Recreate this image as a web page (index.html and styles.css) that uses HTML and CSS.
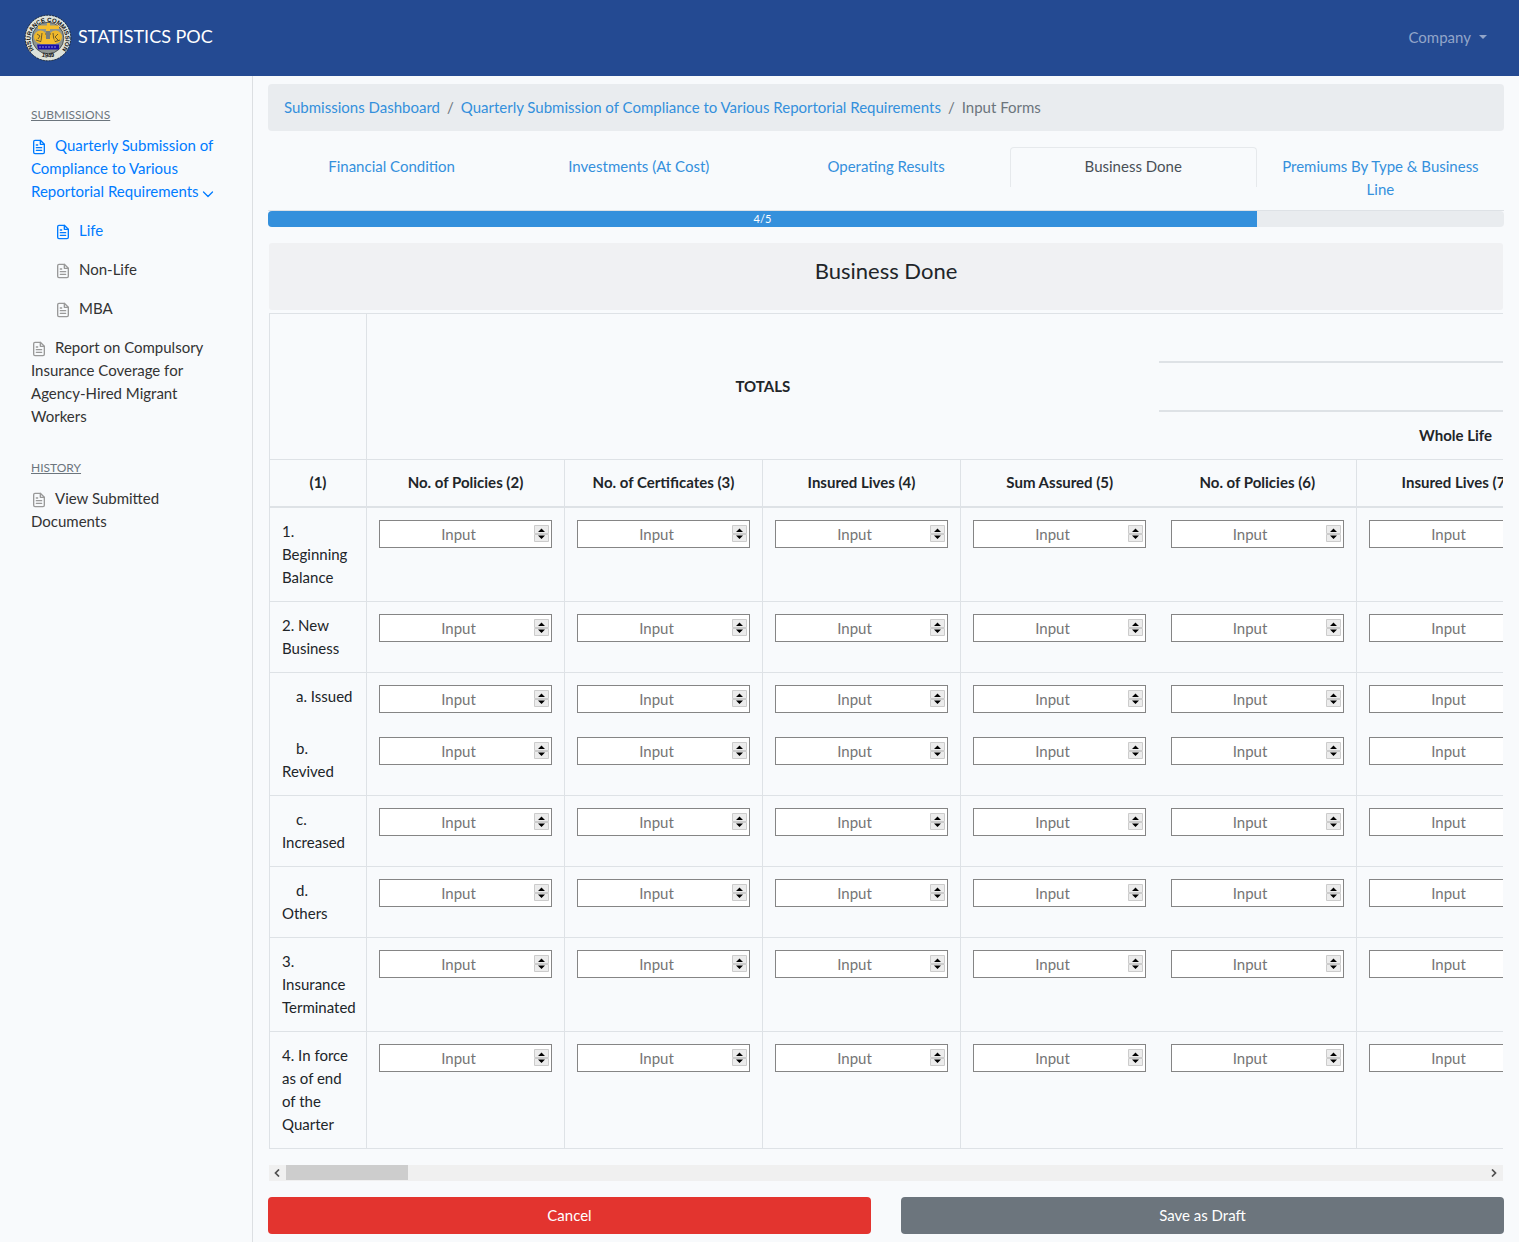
FILE: index.html
```html
<!DOCTYPE html>
<html lang="en">
<head>
<meta charset="utf-8">
<title>Statistics POC</title>
<meta name="viewport" content="width=device-width, initial-scale=1">
<link rel="stylesheet" href="styles.css">
</head>
<body>
<svg class="sprite" aria-hidden="true">
  <symbol id="file" viewBox="0 0 24 24"><path d="M14 2H6a2 2 0 0 0-2 2v16a2 2 0 0 0 2 2h12a2 2 0 0 0 2-2V8z"/><path d="M14 2v6h6M16 13H8M16 17H8M10 9H8"/></symbol>
  <symbol id="chevron" viewBox="0 0 12 12"><path d="M1.500 4 6 8.500 10.500 4"/></symbol>
</svg>
<header class="navbar">
  <a class="brand" href="#">
    <svg class="seal" viewBox="0 0 48 48" aria-hidden="true">
      <defs>
        <path id="ring-top" d="M10.500 36.500A17.500 17.500 0 1 1 37.500 36.500"/>
        <path id="ring-bottom" d="M13 40.500A22 22 0 0 0 35 40.500"/>
      </defs>
      <circle cx="24" cy="24" r="22.800" fill="#dde2da" stroke="#16202c" stroke-width=".9" stroke-dasharray="2 1"/>
      <circle cx="24" cy="24" r="15.800" fill="#8d948f" stroke="#3b4248" stroke-width=".8"/>
      <text class="seal-text"><textPath href="#ring-top" startOffset="50%">INSURANCE COMMISSION</textPath></text>
      <text class="seal-text"><textPath href="#ring-bottom" startOffset="50%">1949</textPath></text>
      <path d="M14 11.500h9V9h3v2.500h9V15h-9v3h-4v-3h-8z" fill="#f5bd2c"/>
      <circle cx="16.500" cy="23" r="6.500" fill="#eeb82b"/>
      <circle cx="31.500" cy="23" r="6.500" fill="#eeb82b"/>
      <path d="M13 20l3 2-2 3M18 19l-1 8M34 20l-3 3 3 3M29 19l1 8M21 20h6M12 26l6 2M36 26l-6 2" fill="none" stroke="#6d5a2a" stroke-width="1"/>
      <path d="M19 24h10l3 6H16z" fill="#f5bd2c"/>
      <path d="M22 17h4v8h-4z" fill="#777d7b"/>
      <path d="M13 30.500h22v5H14z" fill="#1b0fa8"/>
      <path d="M15 33h18" stroke="#aab4e6" stroke-width=".8" stroke-dasharray="2 1"/>
    </svg>
    <span>STATISTICS POC</span>
  </a>
  <button class="account" type="button">Company</button>
</header>
<div class="layout">
  <nav class="sidebar" aria-label="Sections">
    <h2 class="side-title">SUBMISSIONS</h2>
    <ul class="side-list">
      <li><a class="side-link current" href="#"><svg class="file"><use href="#file"/></svg>Quarterly Submission of Compliance to Various Reportorial Requirements <svg class="chevron"><use href="#chevron"/></svg></a>
        <ul class="side-list nested">
          <li><a class="side-link current" href="#"><svg class="file"><use href="#file"/></svg>Life</a></li>
          <li><a class="side-link" href="#"><svg class="file"><use href="#file"/></svg>Non-Life</a></li>
          <li><a class="side-link" href="#"><svg class="file"><use href="#file"/></svg>MBA</a></li>
        </ul>
      </li>
      <li><a class="side-link" href="#"><svg class="file"><use href="#file"/></svg>Report on Compulsory Insurance Coverage for Agency-Hired Migrant Workers</a></li>
    </ul>
    <h2 class="side-title history">HISTORY</h2>
    <ul class="side-list">
      <li><a class="side-link" href="#"><svg class="file"><use href="#file"/></svg>View Submitted Documents</a></li>
    </ul>
  </nav>
  <main class="content">
    <ol class="breadcrumb">
      <li><a href="#">Submissions Dashboard</a></li>
      <li><a href="#">Quarterly Submission of Compliance to Various Reportorial Requirements</a></li>
      <li>Input Forms</li>
    </ol>
    <nav class="tabs" aria-label="Forms">
      <a class="tab" href="#">Financial Condition</a>
      <a class="tab" href="#">Investments (At Cost)</a>
      <a class="tab" href="#">Operating Results</a>
      <a class="tab active" href="#" aria-current="page">Business Done</a>
      <a class="tab" href="#">Premiums By Type &amp; Business Line</a>
    </nav>
    <div class="progress"><div class="progress-bar" style="width:80%">4/5</div></div>
    <form>
      <div class="panel">
        <h1 class="panel-title">Business Done</h1>
        <div class="scroller">
          <table class="grid">
            <colgroup><col class="col-label"><col class="col-value" span="7"><col></colgroup>
            <thead>
              <tr class="first"><th rowspan="3"></th><th class="open" colspan="4" rowspan="3">TOTALS</th><th class="band" colspan="4"></th></tr>
              <tr><th class="band" colspan="4"></th></tr>
              <tr><th class="open" colspan="3">Whole Life</th><th></th></tr>
              <tr class="names"><th>(1)</th><th>No. of Policies (2)</th><th>No. of Certificates (3)</th><th>Insured Lives (4)</th><th class="open">Sum Assured (5)</th><th>No. of Policies (6)</th><th>Insured Lives (7)</th><th></th><th></th></tr>
            </thead>
            <tbody id="rows"></tbody>
          </table>
        </div>
        <div class="scrollbar" aria-hidden="true">
          <svg class="arrow" viewBox="0 0 8 8"><path d="M6 .5 2.500 4 6 7.500"/></svg>
          <div class="track"><div class="thumb"></div></div>
          <svg class="arrow" viewBox="0 0 8 8"><path d="M2 .5 5.500 4 2 7.500"/></svg>
        </div>
      </div>
      <div class="actions">
        <button class="btn cancel" type="button">Cancel</button>
        <button class="btn draft" type="submit">Save as Draft</button>
      </div>
    </form>
  </main>
</div>
<script src="rows.js"></script>
</body>
</html>
```
FILE: styles.css
```css
*, *::before, *::after { box-sizing: border-box; }

body {
  margin: 0;
  background: #f8fafc;
  color: #212529;
  font: 15px/23px Lato, sans-serif;
}

a { color: #3490dc; text-decoration: none; }
button, input { font: inherit; }
.sprite { position: absolute; width: 0; height: 0; }

.navbar {
  display: flex;
  align-items: center;
  justify-content: space-between;
  height: 76px;
  padding: 0 32px 0 24px;
  background: #244a92;
}
.brand { display: flex; align-items: center; gap: 6px; color: #fff; font-size: 18px; }
.brand span { padding-bottom: 3px; }
.seal { width: 48px; height: 48px; }
.seal-text { font: bold 6px "Liberation Sans", sans-serif; text-anchor: middle; fill: #111; }
.account {
  display: flex;
  align-items: center;
  gap: 8px;
  padding: 0 0 2px;
  border: 0;
  background: none;
  color: #92a5c9;
}
.account::after {
  content: "";
  border: 4px solid transparent;
  border-top-color: currentColor;
  border-bottom: 0;
}

.layout { display: flex; min-height: calc(100vh - 76px); }
.sidebar {
  flex: 0 0 253px;
  padding: 27px 30px 0 31px;
  border-right: 1px solid #dcdfe2;
}
.side-title {
  margin: 0 0 8px;
  color: #6c757d;
  font-size: 12px;
  line-height: 23px;
  font-weight: 400;
  text-decoration: underline;
}
.history { margin-top: 28px; }
.side-list { margin: 0; padding: 0; list-style: none; }
.side-list > li + li, .nested { margin-top: 16px; }
.nested { padding-left: 24px; }
.side-link { display: block; color: #333; }
.side-link.current { color: #007bff; }
.file, .chevron { fill: none; stroke: #999; stroke-width: 2; stroke-linejoin: round; stroke-linecap: round; }
.file { width: 16px; height: 16px; margin-right: 8px; vertical-align: -4px; }
.chevron { width: 12px; height: 12px; vertical-align: -3px; stroke-width: 1.3; }
.current .file, .current .chevron { stroke: #007bff; }

.content { flex: 1; min-width: 0; padding: 8px 15px 8px; }
.breadcrumb {
  display: flex;
  margin: 0 0 16px;
  padding: 12px 16px;
  border-radius: 4px;
  background: #e9ecef;
  color: #6c757d;
  list-style: none;
}
.breadcrumb li + li::before { content: "/"; padding: 0 7px; }

.tabs { display: flex; align-items: flex-start; border-bottom: 1px solid #dee2e6; }
.tab { flex: 1 1 0; padding: 7px 16px 9px; border: 1px solid transparent; border-bottom: 0; border-radius: 4px 4px 0 0; text-align: center; }
.tab.active { border-color: #e6e9ec; color: #495057; }

.progress { height: 16px; overflow: hidden; border-radius: 4px; background: #e9ecef; }
.progress-bar { height: 16px; background: #3490dc; color: #fff; font-size: 11px; line-height: 15px; text-align: center; }

.panel { margin: 16px 1px 0; }
.panel-title {
  height: 67px;
  margin: 0 0 3px;
  border-radius: 3px;
  background: #f0f1f3;
  font-size: 22px;
  font-weight: 400;
  line-height: 56px;
  text-align: center;
}
.scroller { overflow-x: auto; scrollbar-width: none; }
.scrollbar { display: flex; align-items: center; height: 16px; margin-top: 16px; background: #f0f0f0; }
.arrow { width: 8px; height: 8px; margin: 0 5px 0 4px; fill: none; stroke: #505050; stroke-width: 1.7; }
.track { flex: 1; height: 16px; }
.thumb { width: 10.170%; height: 15px; background: #cdcdcd; }

.grid { width: 12134px; table-layout: fixed; border-collapse: collapse; }
.col-label { width: 97px; }
.col-value { width: 198px; }
.grid th, .grid td { border: 1px solid #dee2e6; padding: 12px; vertical-align: top; }
.grid th { text-align: center; vertical-align: middle; font-weight: 700; }
.grid thead tr { height: 49px; }
.grid thead .first { height: 48px; }
.grid .open { border-right-style: hidden; }
.grid .band { border-bottom-width: 2px; }
.grid thead .names { height: 47px; }
.grid .names th { padding: 11px 0; border-bottom-width: 2px; white-space: nowrap; }
.grid .label { font-weight: 400; text-align: left; vertical-align: top; }
.indent { padding-left: 14px; }
.grid .joined > * { border-bottom-style: hidden; }

.number {
  display: block;
  width: 173px;
  height: 28px;
  padding: 1px 2px 1px 3px;
  border: 1px solid #858585;
  border-radius: 0;
  background: #fff;
  text-align: center;
}
.number::placeholder { color: #757575; }
.number::-webkit-inner-spin-button {
  appearance: none;
  width: 15px;
  height: 18px;
  opacity: 1;
  background: url("data:image/svg+xml,%3Csvg xmlns='http://www.w3.org/2000/svg' width='15' height='18'%3E%3Cpath fill='%23ececec' stroke='%23cccccc' d='M.5.500h14v8H.5zM.5 9.500h14v7H.5z'/%3E%3Cpath d='M4 7h7L7.500 3.500zM4 10.500h7L7.500 14z'/%3E%3C/svg%3E") center no-repeat;
}

.actions { display: grid; grid-template-columns: 1fr 1fr; gap: 30px; margin-top: 16px; }
.btn { height: 37px; padding: 6px 12px; border: 0; border-radius: 4px; color: #fff; }
.cancel { background: #e3342f; }
.draft { background: #6c757d; }
```
FILE: rows.js
```js
const rows = [
  { label: "1. Beginning Balance" },
  { label: "2. New Business" },
  { label: "a. Issued", indent: true, joined: true },
  { label: "b. Revived", indent: true },
  { label: "c. Increased", indent: true },
  { label: "d. Others", indent: true },
  { label: "3. Insurance Terminated" },
  { label: "4. In force as of end of the Quarter" },
];
const columns = ["No. of Policies (2)", "No. of Certificates (3)", "Insured Lives (4)", "Sum Assured (5)", "No. of Policies (6)", "Insured Lives (7)"];

document.getElementById("rows").innerHTML = rows.map((row) => {
  const cells = columns.map((name, i) =>
    `<td${i === 3 ? ' class="open"' : ""}><input class="number" type="number" placeholder="Input" aria-label="${row.label}, ${name}"></td>`
  ).join("");
  const label = row.indent ? `<span class="indent">${row.label}</span>` : row.label;
  return `<tr${row.joined ? ' class="joined"' : ""}><th class="label" scope="row">${label}</th>${cells}<td></td><td></td></tr>`;
}).join("");
```
